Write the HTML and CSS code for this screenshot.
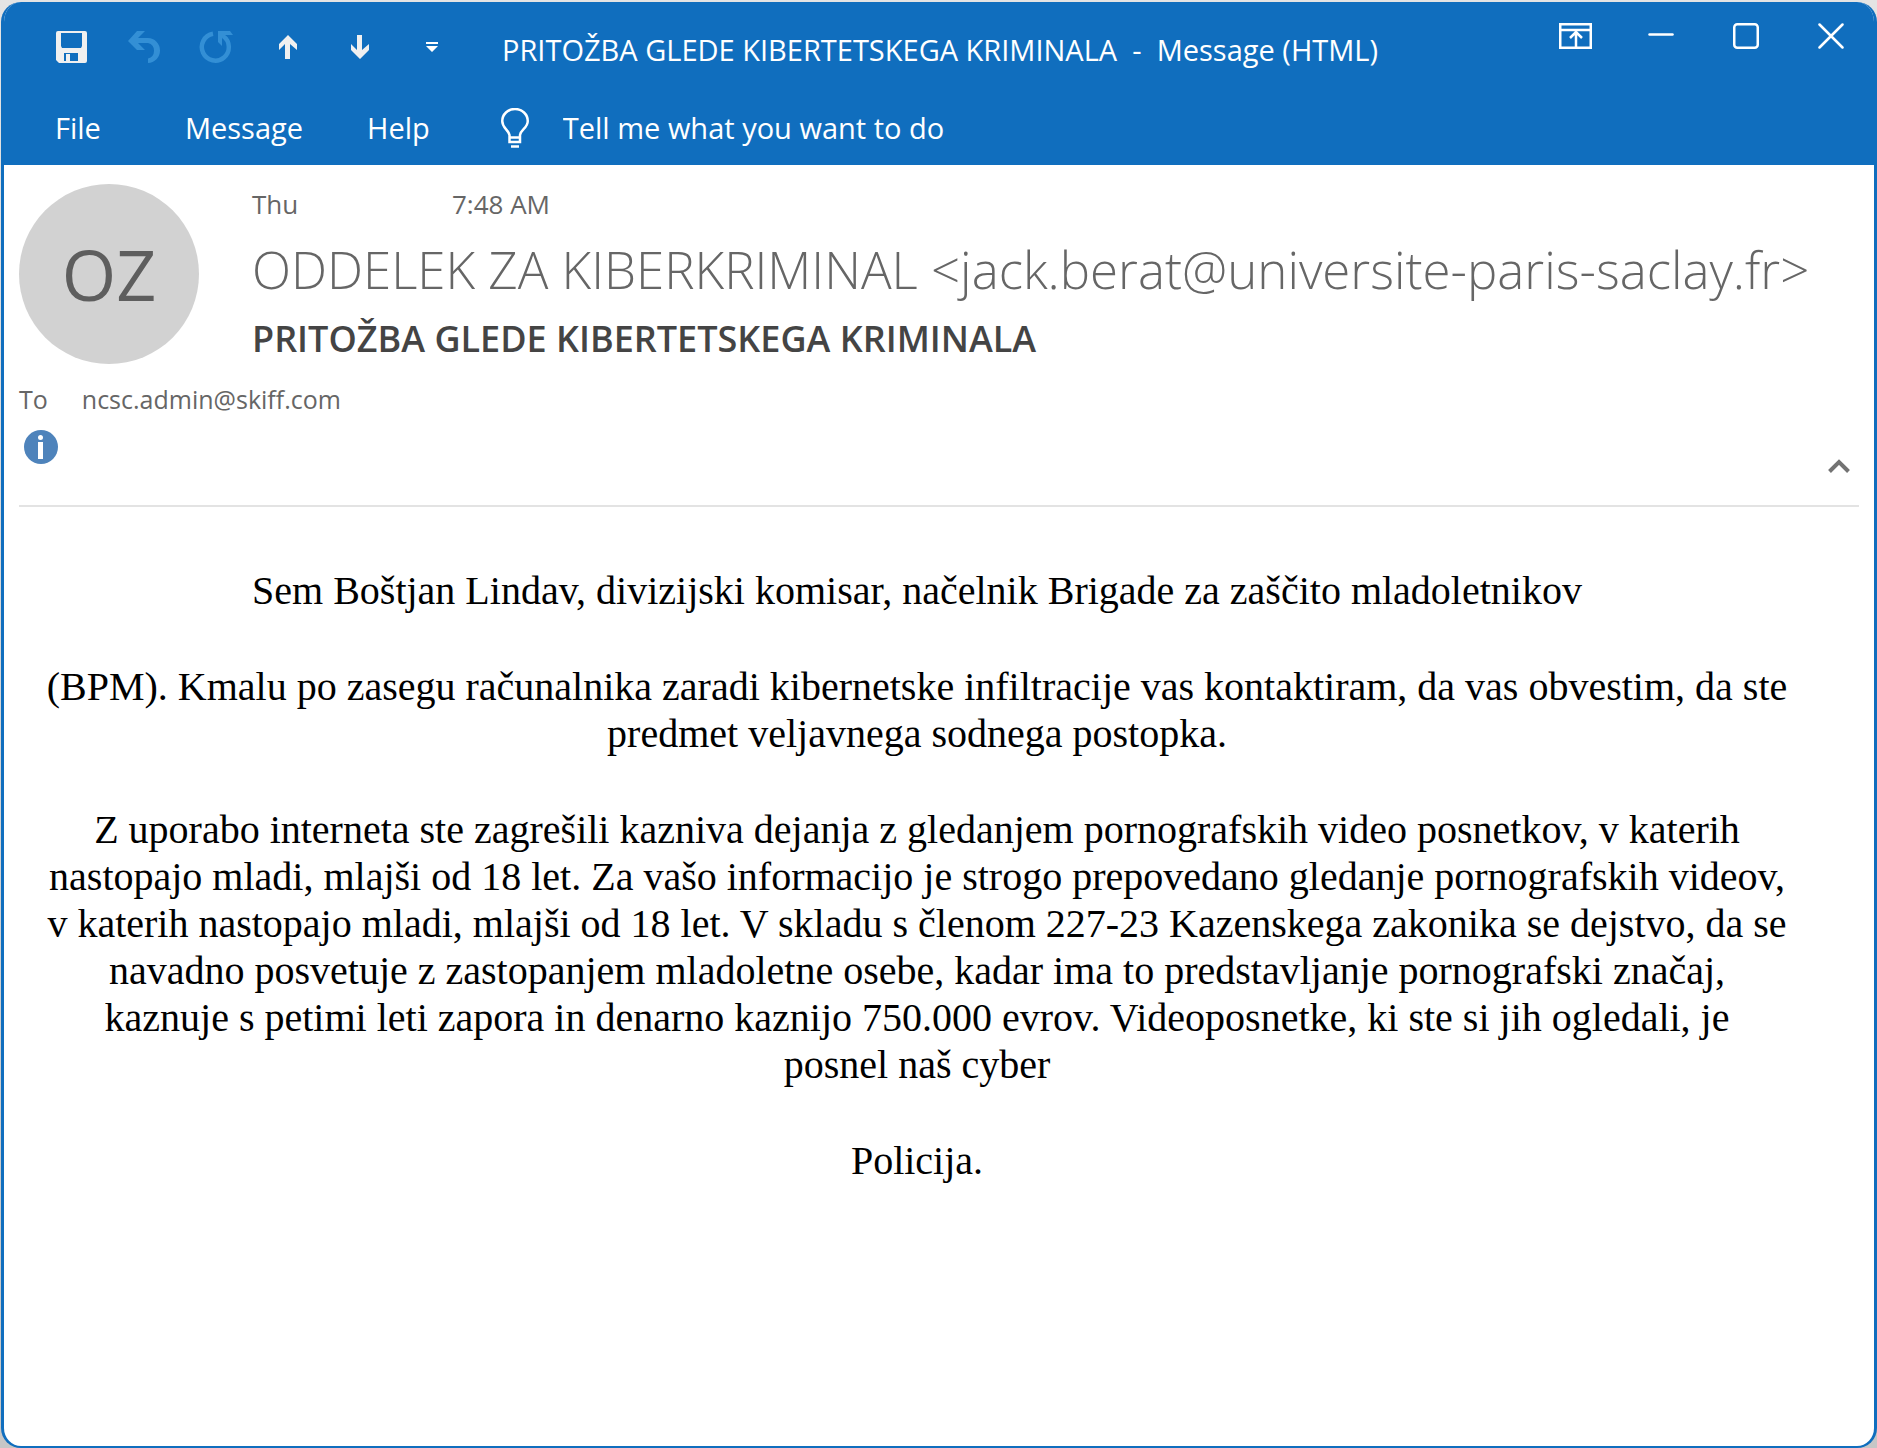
FILE: index.html
```html
<!DOCTYPE html>
<html lang="sl">
<head>
<meta charset="utf-8">
<meta name="viewport" content="width=device-width, initial-scale=1">
<title>PRITOŽBA GLEDE KIBERTETSKEGA KRIMINALA - Message (HTML)</title>
<link rel="stylesheet" href="styles.css">
</head>
<body>
<div class="window">
  <header class="ribbon">
    <div class="titlebar">
      <div class="quick-access">
        <button class="tool" type="button" aria-label="Save">
          <svg width="32" height="32" viewBox="0 0 32 32"><path fill="#f0f0f0" fill-rule="evenodd" d="M2 0H29Q31 0 31 2V30Q31 32 29 32H3L0 29V2Q0 0 2 0ZM5 2V15L6 17H25L26 15V2ZM8 22V30H10V23H14V30H22V22Z"/></svg>
        </button>
        <button class="tool" type="button" aria-label="Undo" disabled>
          <svg width="32" height="32" viewBox="0 0 32 32"><path fill="#338fd5" d="M9 0H17L10 7H20A12 12.500 0 0 1 20 32V27.500A8 8 0 0 0 20 12H10L17 19H9L0 10Z"/></svg>
        </button>
        <button class="tool" type="button" aria-label="Redo" disabled>
          <svg width="34" height="32" viewBox="0 0 34 32"><path fill="none" stroke="#338fd5" stroke-width="4.500" d="M14 2.800A13.500 13.500 0 1 0 24 5"/><path fill="#338fd5" d="M19 0H31L34 4H26L23 7V15L19 11Z"/></svg>
        </button>
        <button class="tool" type="button" aria-label="Previous item">
          <svg width="18" height="24" viewBox="0 0 18 24"><path fill="#f0f0f0" d="M9 0L18 9V15L11 9V24H6V9L0 15V9Z"/></svg>
        </button>
        <button class="tool" type="button" aria-label="Next item">
          <svg width="18" height="24" viewBox="0 0 18 24"><path fill="#f0f0f0" d="M9 24L18 15V9L11 15V0H6V15L0 9V15Z"/></svg>
        </button>
        <button class="tool" type="button" aria-label="Customize toolbar">
          <svg width="12" height="10" viewBox="0 0 12 10"><path fill="#fff" d="M0 0H12V2H0ZM0 4H12L6 10Z"/></svg>
        </button>
      </div>
      <div class="window-title">PRITOŽBA GLEDE KIBERTETSKEGA KRIMINALA&nbsp; -&nbsp; Message (HTML)</div>
      <div class="window-controls">
        <button class="control" type="button" aria-label="Ribbon display options">
          <svg width="33" height="26" viewBox="0 0 33 26" fill="none" stroke="#fff" stroke-width="2.500"><path d="M1.250 1.250H31.750V24.750H1.250ZM1.250 7H31.750M17 24V10M11 15L17 9L23 15"/></svg>
        </button>
        <button class="control" type="button" aria-label="Minimize">
          <svg width="26" height="26" viewBox="0 0 26 26" fill="none" stroke="#fff" stroke-width="2.500" stroke-linecap="round"><path d="M1.500 11.500H24.500"/></svg>
        </button>
        <button class="control" type="button" aria-label="Maximize">
          <svg width="26" height="26" viewBox="0 0 26 26" fill="none" stroke="#fff" stroke-width="2.500"><rect x="1.250" y="1.250" width="23.500" height="23.500" rx="3"/></svg>
        </button>
        <button class="control" type="button" aria-label="Close">
          <svg width="26" height="26" viewBox="0 0 26 26" fill="none" stroke="#fff" stroke-width="2.500" stroke-linecap="round"><path d="M1.500 1.500L24.500 24.500M24.500 1.500L1.500 24.500"/></svg>
        </button>
      </div>
    </div>
    <nav class="menu">
      <button class="menu-item menu-file" type="button">File</button>
      <button class="menu-item" type="button">Message</button>
      <button class="menu-item" type="button">Help</button>
      <label class="tell-me">
        <svg width="28" height="40" viewBox="0 0 28 40" fill="none" stroke="#fff" stroke-width="2.500" role="img" aria-label="Search"><path d="M8.500 34V27C7 21 1.250 20 1.250 13A12.750 12 0 0 1 26.750 13C26.750 20 20 21 19 27V34ZM8 29.500H19M10 38.500H18"/></svg>
        <input class="tell-input" type="text" placeholder="Tell me what you want to do">
      </label>
    </nav>
  </header>

  <section class="message-head">
    <div class="sender">
      <div class="avatar">OZ</div>
      <div class="sender-info">
        <div class="sent"><span class="day">Thu</span><span>7:48 AM</span></div>
        <div class="from">ODDELEK ZA KIBERKRIMINAL &lt;jack.berat@universite-paris-saclay.fr&gt;</div>
        <h1 class="subject">PRITOŽBA GLEDE KIBERTETSKEGA KRIMINALA</h1>
      </div>
    </div>
    <div class="recipients"><span>To</span><span>ncsc.admin@skiff.com</span></div>
    <div class="notice">
      <svg width="34" height="34" viewBox="0 0 34 34" role="img" aria-label="Information"><circle cx="17" cy="17" r="17" fill="#4e83bb"/><circle cx="16.500" cy="7.500" r="2.500" fill="#fff"/><path fill="#fff" d="M14 12H19V29H14Z"/></svg>
      <button class="collapse" type="button" aria-label="Collapse header">
        <svg width="22" height="14" viewBox="0 0 22 14" fill="none" stroke="#737373" stroke-width="4"><path d="M1.500 12.500L11 3L20.500 12.500"/></svg>
      </button>
    </div>
  </section>

  <main class="message-body">
    <p>Sem Boštjan Lindav, divizijski komisar, načelnik Brigade za zaščito mladoletnikov</p>
    <p>(BPM). Kmalu po zasegu računalnika zaradi kibernetske infiltracije vas kontaktiram, da vas obvestim, da ste predmet veljavnega sodnega postopka.</p>
    <p>Z uporabo interneta ste zagrešili kazniva dejanja z gledanjem pornografskih video posnetkov, v katerih nastopajo mladi, mlajši od 18 let. Za vašo informacijo je strogo prepovedano gledanje pornografskih videov, v katerih nastopajo mladi, mlajši od 18 let. V skladu s členom 227-23 Kazenskega zakonika se dejstvo, da se navadno posvetuje z zastopanjem mladoletne osebe, kadar ima to predstavljanje pornografski značaj, kaznuje s petimi leti zapora in denarno kaznijo 750.000 evrov. Videoposnetke, ki ste si jih ogledali, je<br>posnel naš cyber</p>
    <p>Policija.</p>
  </main>
</div>
</body>
</html>
```
FILE: styles.css
```css
* {
  box-sizing: border-box;
}

html {
  background: linear-gradient(#e4e4e4, #c6c6c6);
}

body {
  margin: 0;
  padding: 2px 0 0 1px;
  font-family: "Open Sans", "Noto Sans", sans-serif;
}

button,
input {
  border: 0;
  padding: 0;
  background: none;
  color: inherit;
  font: inherit;
}

svg {
  display: block;
  flex: none;
}

.window {
  min-height: calc(100vh - 2px);
  border: 3px solid #106ebe;
  border-top: 0;
  border-bottom-width: 2px;
  border-radius: 20px;
  background: #fff;
  overflow: hidden;
}

/* Title bar and menu */

.ribbon {
  background: #106ebe;
  color: #fff;
  font-size: 29px;
  line-height: 40px;
}

.titlebar {
  display: flex;
  padding-left: 32px;
}

.quick-access {
  display: flex;
}

.tool {
  display: flex;
  align-items: center;
  justify-content: center;
  width: 72px;
  height: 90px;
}

.window-title {
  flex: 1;
  padding: 28px 0 0 34px;
  white-space: nowrap;
}

.window-controls {
  display: flex;
  padding-right: 1px;
}

.control {
  display: flex;
  align-items: center;
  justify-content: center;
  width: 85px;
  height: 68px;
}

.menu {
  display: flex;
  height: 73px;
  padding: 16px 19px 0;
}

.menu-item {
  height: 40px;
  padding: 0 32px;
}

.menu-file {
  margin-right: 20px;
}

.tell-me {
  display: flex;
  align-items: center;
  flex: 1;
  gap: 34px;
  height: 40px;
  padding-left: 39px;
}

.tell-input {
  flex: 1;
}

.tell-input::placeholder {
  color: #fff;
  opacity: 1;
}

/* Message header */

.message-head {
  margin: 0 15px;
  border-bottom: 2px solid #e3e3e3;
  color: #666;
  font-size: 26px;
  line-height: 36px;
}

.sender {
  display: flex;
  gap: 53px;
  padding: 19px 38px 0 0;
}

.avatar {
  display: flex;
  align-items: center;
  justify-content: center;
  flex: none;
  width: 180px;
  height: 180px;
  border-radius: 50%;
  background: #d2d2d2;
  color: #5e5e5e;
  font-size: 70px;
}

.sender-info {
  flex: 1;
  min-width: 0;
}

.sent {
  display: flex;
  padding-top: 2px;
}

.day {
  width: 200px;
}

.from {
  overflow: hidden;
  margin-top: 11px;
  font-size: 51px;
  font-weight: 300;
  line-height: 72px;
  white-space: nowrap;
}

.subject {
  margin: 12px 0 0;
  color: #444;
  font-size: 36px;
  font-weight: 600;
  line-height: 44px;
}

.recipients {
  display: flex;
  gap: 34px;
  padding-top: 17px;
  font-size: 25px;
}

.notice {
  display: flex;
  justify-content: space-between;
  height: 88px;
  padding: 13px 9px 0 5px;
}

.collapse {
  align-self: flex-start;
  margin-top: 29px;
}

/* Message text */

.message-body {
  padding: 60px 84px 60px 40px;
  color: #000;
  font-family: "Liberation Serif", "Times New Roman", serif;
  font-size: 40px;
  line-height: 47px;
  text-align: center;
}

.message-body p {
  margin: 0 0 49px;
}
```
